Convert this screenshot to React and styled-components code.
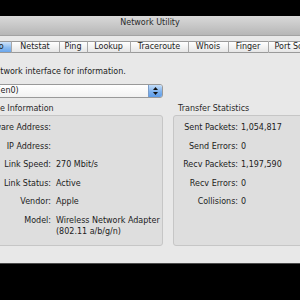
import React from 'react';
import styled, { createGlobalStyle } from 'styled-components';

const GlobalStyle = createGlobalStyle`
  html, body {
    margin: 0;
    padding: 0;
    background: #000;
  }
  body {
    font-family: "DejaVu Sans", "Liberation Sans", sans-serif;
  }
`;

const Screen = styled.div`
  width: 300px;
  height: 300px;
  overflow: hidden;
  background: #000;
  padding-top: 16px;
  box-sizing: border-box;
`;

const Window = styled.div`
  width: 460px;
  height: 248px;
  margin-left: -80px;
  box-sizing: border-box;
  background: #e8e8e8;
  border-bottom: 1px solid #4a4a4a;
  font-size: 8px;
  color: #1c1c1c;
`;

const TitleBar = styled.div`
  height: 20px;
  box-sizing: border-box;
  padding-top: 2px;
  display: flex;
  justify-content: center;
  background: linear-gradient(#d9d9d9, #c4c4c4 60%, #b6b6b6);
  border-bottom: 1px solid #a2a2a2;
  color: #2a2a2a;
  line-height: 10px;
`;

const TabBar = styled.div`
  display: flex;
  justify-content: center;
  margin-top: 5px;
`;

const Tab = styled.div`
  width: ${p => p.$w}px;
  height: 12px;
  box-sizing: border-box;
  display: flex;
  align-items: center;
  justify-content: center;
  line-height: 10px;
  border-top: 1px solid #9a9a9a;
  border-bottom: 1px solid #9a9a9a;
  border-left: 1px solid #a8a8a8;
  background: ${p => p.$active
    ? 'linear-gradient(#cfe3fa, #8cbcf0 55%, #6aa6ec)'
    : 'linear-gradient(#ffffff, #f2f2f2 50%, #e6e6e6)'};
  &:first-child { border-radius: 3px 0 0 3px; }
  &:last-child {
    border-right: 1px solid #9a9a9a;
    border-radius: 0 3px 3px 0;
  }
`;

const Content = styled.div`
  padding-left: 8px;
`;

const Prompt = styled.div`
  margin-top: 14px;
  line-height: 10px;
`;

const Popup = styled.div`
  margin-top: 7px;
  margin-left: 34px;
  width: 201px;
  height: 14px;
  box-sizing: border-box;
  display: flex;
  align-items: center;
  justify-content: space-between;
  border: 1px solid #999;
  border-radius: 3px;
  background: linear-gradient(#ffffff, #f1f1f1);
  padding-left: 5px;
  line-height: 10px;
`;

const Stepper = styled.div`
  width: 13px;
  height: 12px;
  display: flex;
  align-items: center;
  justify-content: center;
  border-left: 1px solid #7a9cc8;
  border-radius: 0 2px 2px 0;
  background: linear-gradient(#c4ddf8, #7fb2ee 55%, #5d9ce8);
`;

const Columns = styled.div`
  display: grid;
  grid-template-columns: 199px 199px;
  column-gap: 10px;
  margin-top: 6px;
  margin-left: 36px;
`;

const GroupTitle = styled.div`
  padding-left: 5px;
  line-height: 10px;
  margin-bottom: 1px;
  color: #2a2a2a;
`;

const GroupBox = styled.div`
  height: 131px;
  box-sizing: border-box;
  background: #dedede;
  border: 1px solid #c6c6c6;
  border-radius: 3px;
  padding: 6px 0 0 ${p => p.$pad}px;
  display: grid;
  grid-template-columns: ${p => p.$label}px 1fr;
  column-gap: ${p => p.$gap}px;
  row-gap: 7.5px;
  align-content: start;
  line-height: 11px;
`;

const Label = styled.div`
  text-align: right;
  white-space: nowrap;
`;

const Value = styled.div`
  white-space: nowrap;
`;

const tabs = [
  ['Info', 30], ['Netstat', 48], ['Ping', 28], ['Lookup', 43],
  ['Traceroute', 58], ['Whois', 40], ['Finger', 40], ['Port Scan', 52],
];

const iface = [
  ['Hardware Address:', ''],
  ['IP Address:', ''],
  ['Link Speed:', '270 Mbit/s'],
  ['Link Status:', 'Active'],
  ['Vendor:', 'Apple'],
  ['Model:', <>Wireless Network Adapter<br />(802.11 a/b/g/n)</>],
];

const stats = [
  ['Sent Packets:', '1,054,817'],
  ['Send Errors:', '0'],
  ['Recv Packets:', '1,197,590'],
  ['Recv Errors:', '0'],
  ['Collisions:', '0'],
];

const Arrows = () => (
  <svg width="5" height="8" viewBox="0 0 5 8">
    <path d="M2.5 0 L5 3 L0 3 Z" fill="#111" />
    <path d="M2.5 8 L5 5 L0 5 Z" fill="#111" />
  </svg>
);

const Rows = ({ items }) => items.map(([k, v]) => (
  <React.Fragment key={k}>
    <Label>{k}</Label>
    <Value>{v}</Value>
  </React.Fragment>
));

export default function App() {
  return (
    <>
      <GlobalStyle />
      <Screen>
        <Window>
          <TitleBar>Network Utility</TitleBar>
          <TabBar>
            {tabs.map(([name, w]) => (
              <Tab key={name} $w={w} $active={name === 'Info'}>{name}</Tab>
            ))}
          </TabBar>
          <Content>
            <Prompt>Please select a network interface for information.</Prompt>
            <Popup>
              <span>AirPort (en0)</span>
              <Stepper><Arrows /></Stepper>
            </Popup>
            <Columns>
              <div>
                <GroupTitle>Interface Information</GroupTitle>
                <GroupBox $pad={8} $label={78} $gap={5}>
                  <Rows items={iface} />
                </GroupBox>
              </div>
              <div>
                <GroupTitle>Transfer Statistics</GroupTitle>
                <GroupBox $pad={6} $label={58} $gap={3}>
                  <Rows items={stats} />
                </GroupBox>
              </div>
            </Columns>
          </Content>
        </Window>
      </Screen>
    </>
  );
}
